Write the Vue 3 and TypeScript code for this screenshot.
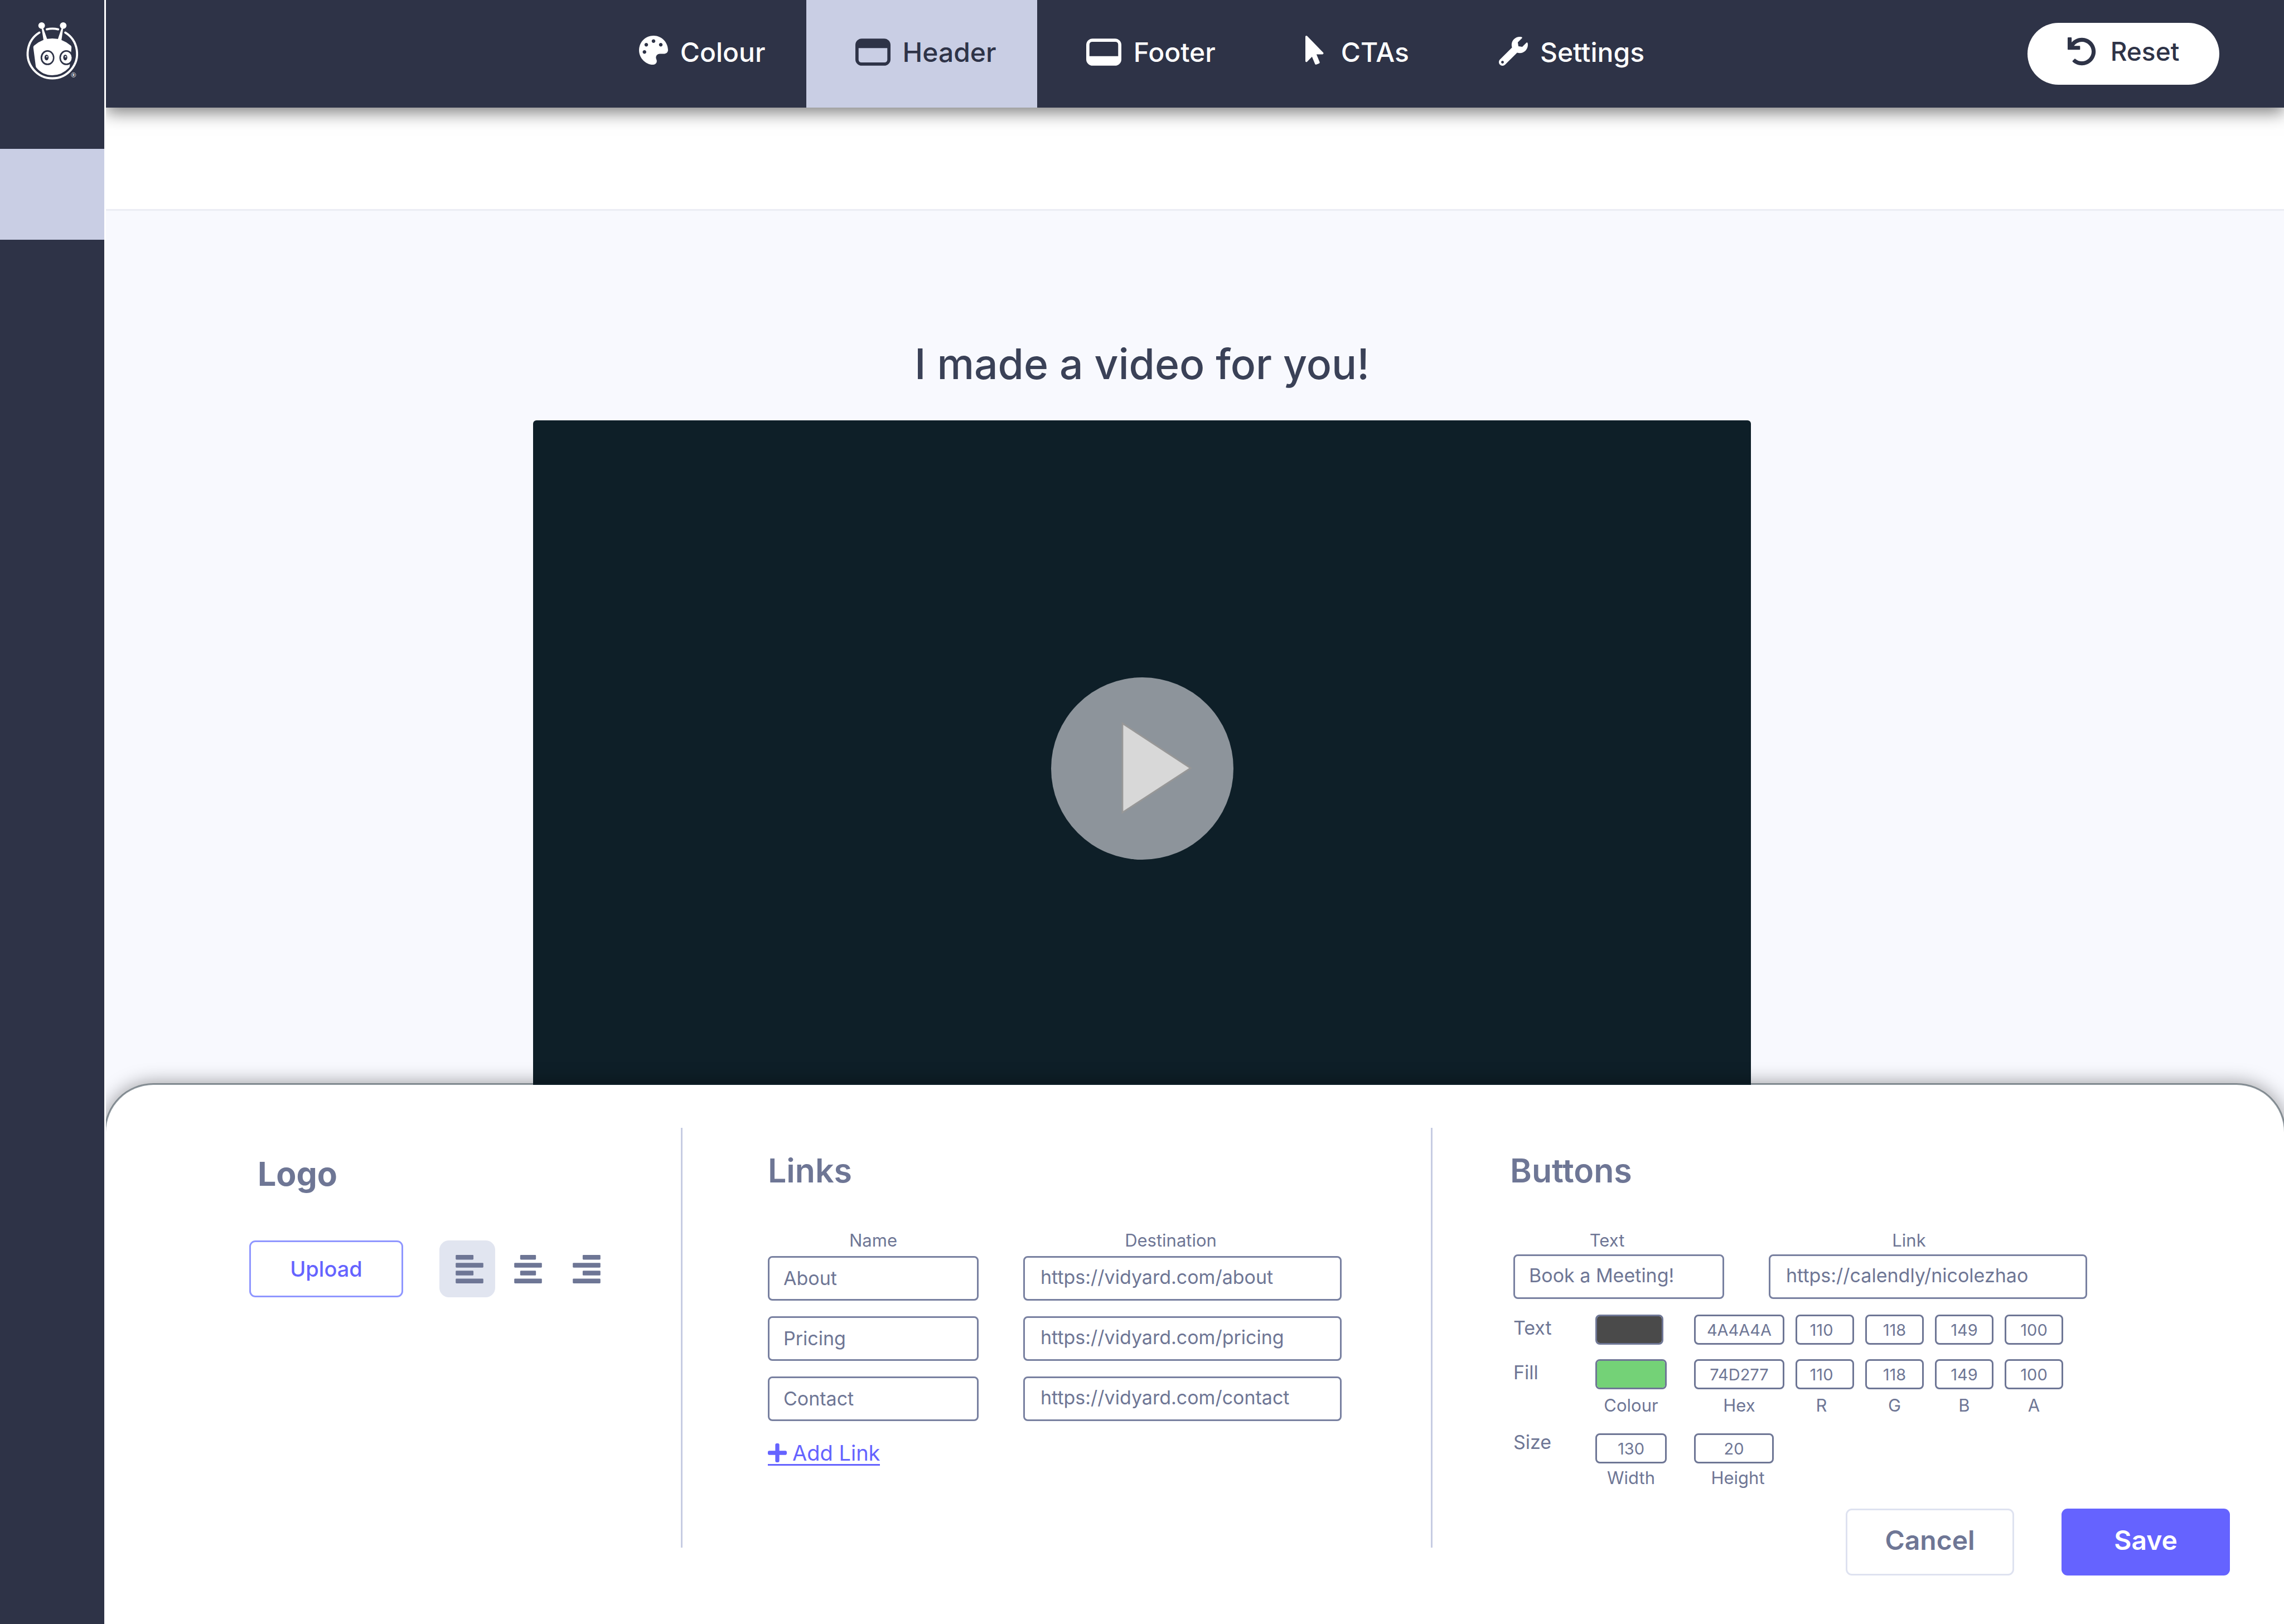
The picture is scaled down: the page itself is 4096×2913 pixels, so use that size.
<script setup lang="ts">
import { ref } from 'vue'

type TabId = 'colour' | 'header' | 'footer' | 'ctas' | 'settings'
type Align = 'left' | 'center' | 'right'

interface Tab {
  id: TabId
  label: string
  width: number
  height: number
  viewBox: string
  path: string
}

interface Bar {
  x: number
  y: number
  width: number
}

const tabs: Tab[] = [
  {
    id: 'colour',
    label: 'Colour',
    width: 52,
    height: 60,
    viewBox: '0 0 512 591',
    path: 'M204.3 5C104.9 24.4 24.8 104.3 5.2 203.4c-37 187 131.7 326.4 258.8 306.7 41.2-6.4 61.4-54.6 42.5-91.7-23.1-45.4 9.9-98.4 60.9-98.4h79.7c35.8 0 64.8-29.6 64.9-65.3C511.5 97.1 368.1-26.9 204.3 5zM96 320c-17.7 0-32-14.3-32-32s14.3-32 32-32 32 14.3 32 32-14.3 32-32 32zm32-128c-17.7 0-32-14.3-32-32s14.3-32 32-32 32 14.3 32 32-14.3 32-32 32zm128-64c-17.7 0-32-14.3-32-32s14.3-32 32-32 32 14.3 32 32-14.3 32-32 32zm128 64c-17.7 0-32-14.3-32-32s14.3-32 32-32 32 14.3 32 32-14.3 32-32 32z',
  },
  {
    id: 'header',
    label: 'Header',
    width: 63,
    height: 49,
    viewBox: '0 0 88 68',
    path: 'M16 0H72A16 16 0 0 1 88 16V52A16 16 0 0 1 72 68H16A16 16 0 0 1 0 52V16A16 16 0 0 1 16 0ZM8 24V53A7 7 0 0 0 15 60H73A7 7 0 0 0 80 53V24Z',
  },
  {
    id: 'footer',
    label: 'Footer',
    width: 63,
    height: 49,
    viewBox: '0 0 88 68',
    path: 'M16 0H72A16 16 0 0 1 88 16V52A16 16 0 0 1 72 68H16A16 16 0 0 1 0 52V16A16 16 0 0 1 16 0ZM15 8A7 7 0 0 0 8 15V44H80V15A7 7 0 0 0 73 8Z',
  },
  {
    id: 'ctas',
    label: 'CTAs',
    width: 42,
    height: 60,
    viewBox: '0 0 414 591',
    path: 'M302.189 329.126H196.105l55.831 135.993c3.889 9.428-.555 19.999-9.444 23.999l-49.165 21.427c-9.165 4-19.443-.571-23.332-9.714l-53.053-129.136-86.664 89.138C18.729 472.71 0 463.554 0 447.977V18.299C0 1.899 19.921-6.096 30.277 5.443l284.412 292.542c11.472 11.179 3.007 31.141-12.5 31.141z',
  },
  {
    id: 'settings',
    label: 'Settings',
    width: 52,
    height: 55,
    viewBox: '0 0 512 542',
    path: 'M507.73 109.1c-2.24-9.03-13.54-12.09-20.12-5.51l-74.36 74.36-67.88-11.31-11.31-67.88 74.36-74.36c6.62-6.62 3.43-17.9-5.66-20.16-47.38-11.74-99.55.91-136.58 37.93-39.64 39.64-50.55 97.1-34.05 147.2L18.74 402.76c-24.99 24.99-24.99 65.51 0 90.5 24.99 24.99 65.51 24.99 90.5 0l213.21-213.21c50.12 16.71 107.47 5.68 147.37-34.22 37.07-37.07 49.7-89.32 37.91-136.73zM64 472c-13.25 0-24-10.75-24-24 0-13.26 10.75-24 24-24s24 10.74 24 24c0 13.25-10.75 24-24 24z',
  },
]
const activeTab = ref<TabId>('header')

const alignments: { id: Align; label: string; bars: Bar[] }[] = [
  {
    id: 'left',
    label: 'Align logo left',
    bars: [
      { x: 0, y: 0, width: 45 },
      { x: 0, y: 20, width: 70 },
      { x: 0, y: 40, width: 45 },
      { x: 0, y: 60, width: 70 },
    ],
  },
  {
    id: 'center',
    label: 'Align logo centre',
    bars: [
      { x: 15, y: 0, width: 40 },
      { x: 0, y: 20, width: 70 },
      { x: 15, y: 40, width: 40 },
      { x: 0, y: 60, width: 70 },
    ],
  },
  {
    id: 'right',
    label: 'Align logo right',
    bars: [
      { x: 25, y: 0, width: 45 },
      { x: 0, y: 20, width: 70 },
      { x: 25, y: 40, width: 45 },
      { x: 0, y: 60, width: 70 },
    ],
  },
]
const activeAlign = ref<Align>('left')

const links = ref([
  { name: 'About', url: 'https://vidyard.com/about' },
  { name: 'Pricing', url: 'https://vidyard.com/pricing' },
  { name: 'Contact', url: 'https://vidyard.com/contact' },
])
function addLink() {
  links.value.push({ name: '', url: '' })
}

const cta = ref({ text: 'Book a Meeting!', link: 'https://calendly/nicolezhao' })
const channels = ['R', 'G', 'B', 'A']
const colours = ref([
  { id: 'text', label: 'Text', swatch: '#4a4a4a', hex: '4A4A4A', rgba: ['110', '118', '149', '100'] },
  { id: 'fill', label: 'Fill', swatch: '#74d277', hex: '74D277', rgba: ['110', '118', '149', '100'] },
])
const size = ref({ width: '130', height: '20' })
</script>

<template>
  <div class="app">
    <aside class="sidebar">
      <a class="brand" href="#" aria-label="Home">
        <svg viewBox="0 0 263 272" fill="none">
          <g stroke="#fff" stroke-width="5.4" stroke-linecap="round">
            <path d="M118 74A62.3 62.3 0 0 1 146.6 74" />
            <path d="M164.6 82.2A62.3 62.3 0 1 1 99.4 82.2" />
          </g>
          <g fill="#fff">
            <circle cx="105" cy="64.5" r="8.4" />
            <circle cx="159.4" cy="64.5" r="8.4" />
            <path d="M104.8 70L108.6 70L119.8 101L110 103Z" />
            <path d="M159.5 70L155.7 70L145.2 101L154.8 103Z" />
            <path d="M86 115Q106 97 132 97T178.5 115Q180.5 117 180.3 120L176 166Q175.6 169 174 171Q156 190 132 190T91.8 171Q90.2 169 90 166L84 120Q83.8 117 86 115Z" />
          </g>
          <ellipse cx="119.8" cy="145.5" rx="17.4" ry="18.8" fill="#2e3347" />
          <ellipse cx="167.2" cy="145.5" rx="17.4" ry="18.8" fill="#2e3347" />
          <ellipse cx="120" cy="145.5" rx="13.6" ry="15" fill="#fff" />
          <ellipse cx="167.2" cy="145.5" rx="13.6" ry="15" fill="#fff" />
          <ellipse cx="117.4" cy="145" rx="5.2" ry="7.3" fill="#2e3347" />
          <ellipse cx="164.6" cy="145" rx="5.2" ry="7.3" fill="#2e3347" />
          <circle cx="118.4" cy="143" r="1.8" fill="#fff" />
          <circle cx="165.4" cy="143" r="1.8" fill="#fff" />
          <circle cx="185.4" cy="189" r="5.8" stroke="#fff" stroke-width="1" />
          <text x="185.4" y="192" class="mark">R</text>
        </svg>
      </a>
      <a class="current" href="#" aria-label="Sharing page"></a>
    </aside>

    <main class="main">
      <header class="topbar">
        <nav class="tabs">
          <button
            v-for="tab in tabs"
            :key="tab.id"
            type="button"
            class="tab"
            :class="{ active: tab.id === activeTab }"
            @click="activeTab = tab.id"
          >
            <svg :width="tab.width" :height="tab.height" :viewBox="tab.viewBox">
              <path fill="currentColor" fill-rule="evenodd" :d="tab.path" />
            </svg>
            <span>{{ tab.label }}</span>
          </button>
        </nav>
        <button type="button" class="reset">
          <svg width="51" height="51" viewBox="0 0 512 512">
            <path fill="currentColor" d="M212.333 224.333H12c-6.627 0-12-5.373-12-12V12C0 5.373 5.373 0 12 0h48c6.627 0 12 5.373 12 12v78.112C117.773 39.279 184.26 7.47 258.175 8.007c136.906.994 246.448 111.623 246.157 248.532C504.041 393.258 393.12 504 256.333 504c-64.089 0-122.496-24.313-166.51-64.215-5.099-4.622-5.334-12.554-.467-17.42l33.967-33.967c4.474-4.474 11.662-4.717 16.401-.525C170.76 415.336 211.58 432 256.333 432c97.268 0 176-78.716 176-176 0-97.267-78.716-176-176-176-58.496 0-110.28 28.476-142.274 72.333h98.274c6.627 0 12 5.373 12 12v48c0 6.627-5.373 12-12 12z" />
          </svg>
          <span>Reset</span>
        </button>
      </header>
      <div class="strip"></div>

      <section class="stage">
        <h1>I made a video for you!</h1>
        <div class="video">
          <button type="button" class="play" aria-label="Play video">
            <svg viewBox="0 0 460 460">
              <circle cx="230" cy="230" r="230" fill="#8d949b" />
              <path d="M180 116V341L352 229Z" fill="#d8d8d8" stroke="#979797" stroke-width="4" />
            </svg>
          </button>
        </div>
      </section>

      <form class="panel" @submit.prevent>
        <section class="logo-section">
          <h2 class="logo-title">Logo</h2>
          <div class="logo-tools">
            <button type="button" class="upload">Upload</button>
            <div class="aligns">
              <button
                v-for="item in alignments"
                :key="item.id"
                type="button"
                class="align"
                :class="{ active: item.id === activeAlign }"
                :aria-label="item.label"
                @click="activeAlign = item.id"
              >
                <svg width="50" height="51" viewBox="0 0 70 72">
                  <rect
                    v-for="bar in item.bars"
                    :key="bar.y"
                    :x="bar.x"
                    :y="bar.y"
                    :width="bar.width"
                    height="12"
                    rx="2"
                    fill="currentColor"
                  />
                </svg>
              </button>
            </div>
          </div>
        </section>

        <section class="links-section">
          <h2>Links</h2>
          <div class="pairs">
            <label class="caption" for="link-name-0">Name</label>
            <label class="caption caption-wide" for="link-url-0">Destination</label>
            <template v-for="(link, i) in links" :key="i">
              <input :id="`link-name-${i}`" v-model="link.name" class="field" type="text" aria-label="Name" />
              <input :id="`link-url-${i}`" v-model="link.url" class="field url" type="text" aria-label="Destination" />
            </template>
          </div>
          <button type="button" class="add" @click="addLink">
            <svg width="34" height="34" viewBox="0 32 448 448">
              <path fill="currentColor" d="M416 208H272V64c0-17.67-14.33-32-32-32h-32c-17.67 0-32 14.33-32 32v144H32c-17.67 0-32 14.33-32 32v32c0 17.67 14.33 32 32 32h144v144c0 17.67 14.33 32 32 32h32c17.67 0 32-14.33 32-32V304h144c17.67 0 32-14.33 32-32v-32c0-17.67-14.33-32-32-32z" />
            </svg>
            <span>Add Link</span>
          </button>
        </section>

        <section class="buttons-section">
          <h2>Buttons</h2>
          <div class="cta-form">
            <div class="pairs cta-pairs">
              <label class="caption caption-wide" for="cta-text">Text</label>
              <label class="caption caption-wider" for="cta-link">Link</label>
              <input id="cta-text" v-model="cta.text" class="field" type="text" />
              <input id="cta-link" v-model="cta.link" class="field url" type="text" />
            </div>

            <div class="colours">
              <template v-for="row in colours" :key="row.id">
                <label class="row-label" :for="`swatch-${row.id}`">{{ row.label }}</label>
                <input
                  :id="`swatch-${row.id}`"
                  v-model="row.swatch"
                  class="swatch"
                  :class="`swatch-${row.id}`"
                  type="color"
                />
                <input
                  v-model="row.hex"
                  class="box hex"
                  type="text"
                  :aria-label="`${row.label} hex`"
                />
                <input
                  v-for="(channel, c) in channels"
                  :key="channel"
                  v-model="row.rgba[c]"
                  class="box channel"
                  :class="{ red: channel === 'R' }"
                  type="text"
                  :aria-label="`${row.label} ${channel}`"
                />
              </template>
              <span></span>
              <span class="caption swatch-caption">Colour</span>
              <span class="caption hex-caption">Hex</span>
              <span
                v-for="channel in channels"
                :key="channel"
                class="caption channel-caption"
                :class="{ red: channel === 'R' }"
              >{{ channel }}</span>
            </div>

            <div class="sizes">
              <span class="row-label">Size</span>
              <input id="size-width" v-model="size.width" class="box size-width" type="text" />
              <input id="size-height" v-model="size.height" class="box size-height" type="text" />
              <span></span>
              <label class="caption swatch-caption" for="size-width">Width</label>
              <label class="caption" for="size-height">Height</label>
            </div>
          </div>

          <div class="actions">
            <button type="button" class="cancel">Cancel</button>
            <button type="submit" class="save">Save</button>
          </div>
        </section>
      </form>
    </main>
  </div>
</template>

<style>
body {
  margin: 0;
}
</style>

<style scoped>
.app {
  --navy: #2e3347;
  --lavender: #c9cee4;
  --slate: #6e7695;
  --violet: #6563ff;
  display: flex;
  min-height: 100vh;
  background: #f8f9fe;
  color: var(--slate);
  font-family: Inter, 'Open Sans', sans-serif;
}
.app * {
  box-sizing: border-box;
}
button,
input {
  margin: 0;
  padding: 0;
  border: 0;
  background: none;
  color: inherit;
  font-family: inherit;
}
button {
  cursor: pointer;
}
svg {
  display: block;
  flex: none;
}
h1,
h2 {
  margin: 0;
}

/* Sidebar */
.sidebar {
  position: relative;
  z-index: 2;
  flex: none;
  width: 190px;
  border-right: 3px solid #fff;
  background: var(--navy);
}
.brand {
  display: block;
  height: 267px;
}
.brand svg {
  width: 100%;
}
.mark {
  fill: #fff;
  font-size: 8px;
  font-weight: 700;
  text-anchor: middle;
}
.current {
  display: block;
  height: 163px;
  background: var(--lavender);
}

.main {
  display: flex;
  flex: 1;
  flex-direction: column;
  min-width: 0;
  overflow: hidden;
}

/* Top bar */
.topbar {
  position: relative;
  z-index: 1;
  display: grid;
  flex: none;
  grid-template-columns: 865fr auto 612fr auto;
  align-items: center;
  height: 193px;
  padding-right: 116px;
  background: var(--navy);
  box-shadow: 0 9px 28px rgba(0, 0, 0, 0.5);
}
.tabs {
  display: flex;
  grid-column: 2;
  height: 100%;
}
.tab {
  display: flex;
  align-items: center;
  gap: 22px;
  padding: 0 73px 6px 88px;
  color: #fff;
  font-size: 48px;
  font-weight: 500;
}
.tab.active {
  background: var(--lavender);
  color: var(--navy);
}
.reset {
  display: flex;
  grid-column: 4;
  align-items: center;
  justify-content: center;
  gap: 26px;
  width: 344px;
  height: 111px;
  padding-bottom: 9px;
  border-radius: 56px;
  background: #fff;
  color: var(--navy);
  font-size: 46px;
  font-weight: 500;
}
.strip {
  flex: none;
  height: 185px;
  border-bottom: 3px solid #ebedf4;
  background: #fff;
}

/* Preview */
.stage {
  display: flex;
  flex: 1 0 auto;
  flex-direction: column;
  align-items: center;
  padding: 227px 190px 0 0;
}
h1 {
  margin-bottom: 53px;
  color: #3a4157;
  font-size: 75px;
  font-weight: 500;
  line-height: 96px;
}
.video {
  display: flex;
  align-items: center;
  justify-content: center;
  width: 100%;
  max-width: 2184px;
  aspect-ratio: 7 / 4;
  border-radius: 6px;
  background: #0e1f28;
}
.play {
  width: 327px;
  border-radius: 50%;
}

/* Settings panel */
.panel {
  position: relative;
  display: grid;
  grid-template-columns: 1034fr 1345fr 1527fr;
  margin: -88px -3px 0;
  padding: 77px 0 87px;
  border: 3px solid rgba(14, 31, 40, 0.46);
  border-bottom: 0;
  border-radius: 88px 88px 0 0;
  background: #fff;
  background-clip: padding-box;
  box-shadow: 0 0 34px rgba(0, 0, 0, 0.4);
}
h2 {
  font-size: 59px;
  font-weight: 600;
  line-height: 72px;
}
.logo-section,
.links-section {
  margin-bottom: 50px;
  border-right: 3px solid #c6cce3;
}
.logo-section {
  padding: 47px 0 0 257px;
}
.links-section {
  padding: 41px 0 0 153px;
}
.buttons-section {
  padding: 41px 97px 0 139px;
}

.logo-title {
  padding-left: 15px;
  font-weight: 700;
}
.logo-tools {
  display: flex;
  gap: 65px;
  margin-top: 83px;
}
.upload {
  width: 276px;
  height: 102px;
  border: 3px solid #8f96ff;
  border-radius: 11px;
  color: var(--violet);
  font-size: 38px;
  font-weight: 500;
}
.aligns {
  display: flex;
  gap: 5px;
}
.align {
  display: flex;
  align-items: center;
  justify-content: center;
  width: 100px;
  height: 102px;
  padding-left: 8px;
  border-radius: 17px;
}
.align.active {
  background: #e1e5f0;
}

.pairs {
  display: grid;
  grid-template-columns: 378px 571px;
  column-gap: 80px;
  row-gap: 28px;
  margin-top: 69px;
}
.caption {
  font-size: 31px;
  line-height: 40px;
  text-align: center;
}
.pairs .caption {
  margin-bottom: -20px;
}
.cta-pairs .caption {
  margin-bottom: -23px;
}
.caption-wide {
  padding-right: 42px;
}
.caption-wider {
  padding-right: 68px;
}
.field {
  width: 100%;
  height: 80px;
  padding: 0 20px 2px 25px;
  border: 3px solid #7880a0;
  border-radius: 8px;
  font-size: 34px;
}
.field.url {
  padding: 0 20px 6px 28px;
}
.cta-pairs .field {
  padding-bottom: 6px;
}
.add {
  display: flex;
  align-items: center;
  gap: 10px;
  margin-top: 37px;
  border-bottom: 3px solid var(--violet);
  color: var(--violet);
  font-size: 38px;
  line-height: 40px;
}

.cta-form {
  padding-left: 6px;
}
.colours {
  display: grid;
  grid-template-columns: 147px 177px 182px 125px 125px 125px 105px;
  row-gap: 26px;
  margin-top: 28px;
}
.colours .caption {
  margin-top: -17px;
}
.row-label {
  font-size: 34px;
  line-height: 48px;
}
.swatch {
  width: 128px;
  height: 54px;
  border: 3px solid var(--slate);
  border-radius: 8px;
  overflow: hidden;
}
.swatch-text {
  width: 122px;
}
.swatch::-webkit-color-swatch-wrapper {
  padding: 0;
}
.swatch::-webkit-color-swatch {
  border: 0;
  border-radius: 0;
}
.box {
  height: 54px;
  border: 3px solid var(--slate);
  border-radius: 8px;
  font-size: 29px;
  text-align: center;
}
.hex {
  width: 162px;
}
.channel {
  width: 105px;
}
.red {
  padding-right: 12px;
}
.swatch-caption {
  width: 128px;
}
.hex-caption {
  width: 162px;
}
.channel-caption {
  width: 105px;
}

.sizes {
  display: grid;
  grid-template-columns: 147px 177px 157px;
  row-gap: 6px;
  margin-top: 30px;
}
.sizes .row-label {
  line-height: 32px;
}
.size-width {
  width: 128px;
}
.size-height {
  width: 143px;
}

.actions {
  display: flex;
  justify-content: flex-end;
  gap: 85px;
  margin-top: 35px;
}
.cancel,
.save {
  width: 302px;
  height: 120px;
  padding-bottom: 8px;
  border-radius: 11px;
  font-size: 48px;
  font-weight: 600;
}
.cancel {
  border: 3px solid #dee2f0;
}
.save {
  background: var(--violet);
  color: #fff;
}
</style>
